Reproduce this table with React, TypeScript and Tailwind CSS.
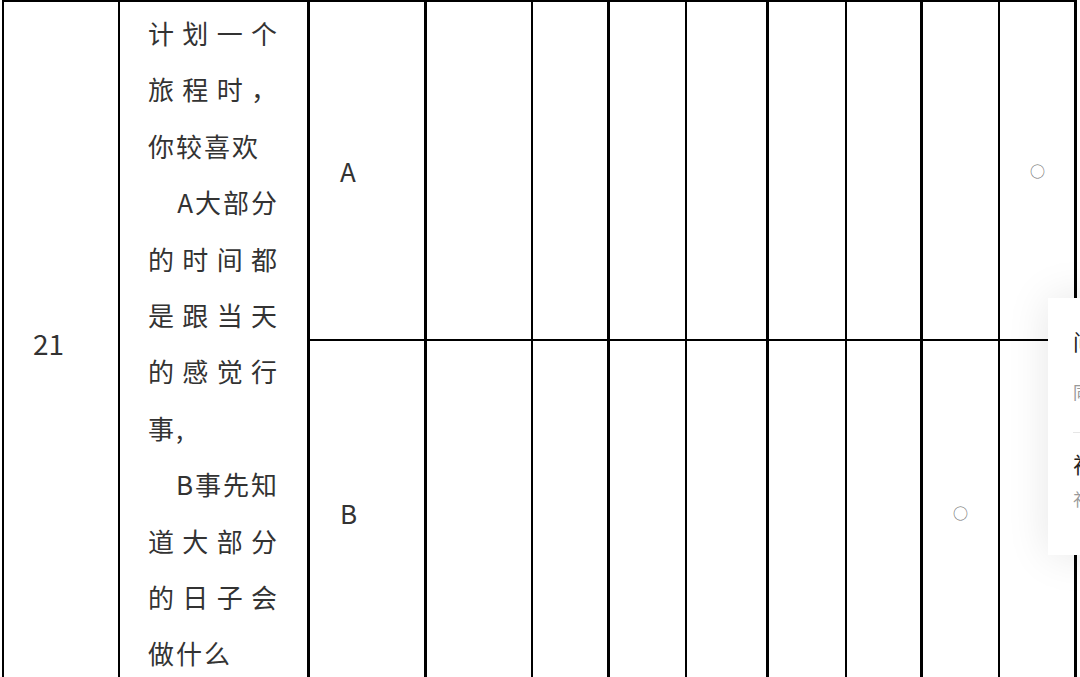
import React from 'react';

type Line = { text: string; align: 'justify' | 'left' | 'right' };

const questionLines: Line[] = [
  { text: '计划一个', align: 'justify' },
  { text: '旅程时，', align: 'justify' },
  { text: '你较喜欢', align: 'left' },
  { text: 'A大部分', align: 'right' },
  { text: '的时间都', align: 'justify' },
  { text: '是跟当天', align: 'justify' },
  { text: '的感觉行', align: 'justify' },
  { text: '事,', align: 'left' },
  { text: 'B事先知', align: 'right' },
  { text: '道大部分', align: 'justify' },
  { text: '的日子会', align: 'justify' },
  { text: '做什么', align: 'left' }
];

// column widths include their left border, the last one also the right border
const columns = [
  'w-[117px] border-l-[3px]',
  'w-[107px] border-l-[3px]',
  'w-[76px] border-l-2',
  'w-[78px] border-l-[3px]',
  'w-[81px] border-l-2',
  'w-[79px] border-l-[3px]',
  'w-[75px] border-l-2',
  'w-[78px] border-l-[3px]',
  'w-[79px] border-l-2 border-r-[3px]'
];

const rows = [
  { label: 'A', mark: 8 },
  { label: 'B', mark: 7 }
];

const alignClass = {
  justify: 'text-justify [text-align-last:justify]',
  left: 'text-left',
  right: 'text-right'
};

function AnswerRow({ label, mark, first }: { label: string; mark: number; first: boolean }) {
  return (
    <div className={first ? 'flex h-[337px]' : 'flex flex-1 border-t-2 border-black'}>
      {columns.map((col, i) =>
        <div key={i} className={`${col} shrink-0 border-black flex items-center pl-[30px]`}>
          {i === 0 && <span className="text-[26px] text-[#333]">{label}</span>}
          {i === mark && <span className="text-[15px] leading-none text-[#6f6f6f]">○</span>}
        </div>
      )}
    </div>);

}

export default function App() {
  return (
    <div className="relative w-[1080px] h-[677px] overflow-hidden bg-white font-['Noto_Sans_CJK_SC','Noto_Sans',sans-serif]">
      <div className="flex ml-[2px] border-t-2 border-black w-[1075px]">
        {/* Number */}
        <div className="w-[116px] shrink-0 border-l-2 border-black flex items-center pl-[29px]">
          <span className="text-[28px] text-[#333]">21</span>
        </div>

        {/* Question */}
        <div className="w-[189px] shrink-0 border-l-2 border-black px-[28px] pt-[3px] pb-[2px]">
          {questionLines.map((line, i) =>
          <div
            key={i}
            className={`${alignClass[line.align]} text-[26px] leading-[56.4px] tracking-[2px] text-[#333] whitespace-nowrap`}>
              {line.text}
            </div>
          )}
        </div>

        {/* Answers */}
        <div className="flex flex-col flex-1">
          {rows.map((r, i) =>
          <AnswerRow key={r.label} label={r.label} mark={r.mark} first={i === 0} />
          )}
        </div>
      </div>

      {/* Side popup */}
      <div className="absolute left-[1048px] top-[298px] w-[320px] h-[257px] bg-white shadow-[0_0_40px_rgba(0,0,0,0.1)] pl-[25px] pt-[30px]">
        <p className="text-[22px] leading-[24px] text-[#222] whitespace-nowrap">问卷调查</p>
        <p className="mt-[30px] text-[17px] leading-[20px] text-[#999] whitespace-nowrap">同步查看结果</p>
        <div className="mt-[30px] border-t border-[#e6e6e6]" />
        <p className="mt-[18px] text-[22px] leading-[24px] text-[#222] whitespace-nowrap">视频讲解</p>
        <p className="mt-[14px] text-[17px] leading-[20px] text-[#999] whitespace-nowrap">礼包领取</p>
      </div>
    </div>);

}
